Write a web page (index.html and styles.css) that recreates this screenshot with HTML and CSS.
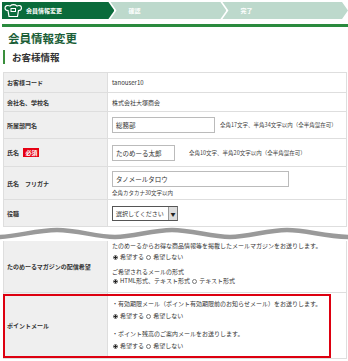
FILE: index.html
```html
<!DOCTYPE html>
<html lang="ja">
<head>
    <meta charset="UTF-8">
    <meta name="viewport" content="width=device-width, initial-scale=1.0">
    <title>会員情報変更</title>
    <link rel="stylesheet" href="styles.css">
</head>
<body>
<div class="page">

    <!-- ステップ -->
    <div class="steps">
        <div class="step step-current">
            <svg class="step-logo" width="20" height="15" viewBox="0 0 20 15">
                <path d="M2 5 C2 2.5 5 2 7 3 C9 1.5 12 1.5 14 3 C16 2 18.5 2.5 18.5 5 C18.5 7 16.5 7.5 15.5 7.5 L14.5 13.5 L6 13.5 L5 7.5 C3.5 7.5 2 7 2 5 Z" fill="none" stroke="#fff" stroke-width="1.2"/>
                <rect x="8" y="5.5" width="4.5" height="3" fill="none" stroke="#fff" stroke-width="1"/>
            </svg>
            <span>会員情報変更</span>
        </div>
        <div class="step">確認</div>
        <div class="step step-last">完了</div>
    </div>

    <h1 class="page-title">会員情報変更</h1>
    <h2 class="section-title">お客様情報</h2>

    <table class="form-table">
        <tr class="row-code">
            <th>お客様コード</th>
            <td>tanouser10</td>
        </tr>
        <tr class="row-company">
            <th>会社名、学校名</th>
            <td>株式会社大塚商会</td>
        </tr>
        <tr class="row-dept">
            <th>所属部門名</th>
            <td>
                <div class="field">
                    <div class="input input-dept">総務部</div>
                    <span class="note">全角17文字、半角34文字以内（全半角混在可）</span>
                </div>
            </td>
        </tr>
        <tr class="row-name">
            <th>氏名 <span class="required">必須</span></th>
            <td>
                <div class="field">
                    <div class="input input-name">たのめーる太郎</div>
                    <span class="note note-name">全角10文字、半角20文字以内（全半角混在可）</span>
                </div>
            </td>
        </tr>
        <tr class="row-kana">
            <th>氏名　フリガナ</th>
            <td>
                <div class="input input-kana">タノメールタロウ</div>
                <div class="note note-under">全角カタカナ30文字以内</div>
            </td>
        </tr>
        <tr class="row-post">
            <th>役職</th>
            <td>
                <div class="select">
                    <span class="select-text">選択してください</span>
                    <span class="select-btn">▼</span>
                </div>
            </td>
        </tr>
    </table>

    <!-- 省略の波線 -->
    <div class="wave">
        <svg width="348" height="14" viewBox="0 0 348 14">
            <path d="M-3 10 C16 10 36 3 57 3 C78 3 96 10 115 10 C134 10 152 3 172 3 C192 3 211 10 230 10 C249 10 267 3 287 3 C307 3 326 10 351 10" fill="none" stroke="#9a9a9a" stroke-width="4.5"/>
        </svg>
    </div>

    <div class="lower">
        <table class="form-table">
            <tr class="row-mag">
                <th>たのめーるマガジンの配信希望</th>
                <td>
                    <p class="line">たのめーるからお得な商品情報等を掲載したメールマガジンをお送りします。</p>
                    <p class="line radios"><span class="radio checked"></span>希望する <span class="radio"></span>希望しない</p>
                    <p class="line line-sub">ご希望されるメールの形式</p>
                    <p class="line line-tight"><span class="radio checked"></span>HTML形式、テキスト形式 <span class="radio"></span>テキスト形式</p>
                </td>
            </tr>
            <tr class="row-point">
                <th>ポイントメール</th>
                <td>
                    <p class="line">・有効期限メール（ポイント有効期限前のお知らせメール）をお送りします。</p>
                    <p class="line radios"><span class="radio checked"></span>希望する <span class="radio"></span>希望しない</p>
                    <p class="line line-gap">・ポイント残高のご案内メールをお送りします。</p>
                    <p class="line radios"><span class="radio checked"></span>希望する <span class="radio"></span>希望しない</p>
                </td>
            </tr>
        </table>
        <!-- 注目枠 -->
        <div class="highlight"></div>
    </div>

</div>
</body>
</html>
```

FILE: styles.css
```css
* { margin: 0; padding: 0; box-sizing: border-box; }
body {
    background: #fff;
    color: #333;
    font-family: "Noto Sans CJK JP", "Noto Sans", sans-serif;
    font-size: 6px;
}
.page { padding: 2px 0 0 2px; width: 348px; overflow: hidden; }

/* steps */
.steps { display: flex; height: 17px; }
.step {
    display: flex;
    align-items: center;
    height: 17px;
    width: 120px;
    padding-left: 18px;
    background: #bdd9cc;
    color: #fff;
    font-weight: bold;
    font-size: 6px;
    margin-left: -4px;
    clip-path: polygon(0 0, calc(100% - 6px) 0, 100% 50%, calc(100% - 6px) 100%, 0 100%, 6px 50%);
}
.step-current {
    width: 117px;
    margin-left: 0;
    padding-left: 1px;
    background: #0a6b3b;
    clip-path: polygon(0 0, calc(100% - 6px) 0, 100% 50%, calc(100% - 6px) 100%, 0 100%);
}
.step-current span { margin-left: 3px; }
.step-last { width: 130px; }
.step-logo { display: block; }

.page-title {
    margin-top: 5px;
    border-top: 3px solid #2a8a3e;
    padding: 4px 0 0 6px;
    font-size: 11.5px;
    line-height: 14px;
    color: #1b5e37;
}
.section-title {
    margin: 5px 0 0 1px;
    border-left: 2px solid #3a8f3c;
    padding-left: 7px;
    font-size: 9.5px;
    line-height: 14px;
    font-weight: bold;
    color: #333;
}

/* table */
.form-table {
    border-collapse: collapse;
    width: 344px;
    margin-left: 1px;
}
.page > .form-table { margin-top: 8px; }
.form-table th, .form-table td {
    border: 1px solid #dedede;
    vertical-align: middle;
    text-align: left;
}
.form-table th {
    width: 104px;
    background: #efefef;
    padding-left: 3px;
    font-weight: bold;
    font-size: 6px;
}
.form-table td { padding-left: 4px; }
.row-code { height: 20px; }
.row-company { height: 19px; }
.row-dept { height: 27px; }
.row-name { height: 28px; }
.row-kana { height: 33px; }
.row-post { height: 27px; }

.required {
    display: inline-block;
    background: #e60012;
    color: #fff;
    padding: 0 2px;
    margin-left: 3px;
    line-height: 9px;
}

.field { display: flex; align-items: center; }
.input {
    border: 1px solid #bbb;
    height: 16px;
    line-height: 14px;
    padding-left: 3px;
    font-size: 6.5px;
    color: #333;
    background: #fff;
}
.input-dept { width: 103px; }
.input-name { width: 63px; }
.input-kana { width: 177px; margin-top: 1px; }
.note { margin-left: 5px; font-size: 5.5px; color: #444; }
.note-name { margin-left: 14px; }
.note-under { margin: 2px 0 0 0; }

.select {
    display: flex;
    width: 66px;
    height: 15px;
    border: 1px solid #555;
    border-right-color: #777;
    background: #fff;
}
.select-text { flex: 1; line-height: 13px; padding-left: 3px; font-size: 6px; }
.select-btn {
    width: 9px;
    background: #ddd;
    border-left: 1px solid #999;
    font-size: 5px;
    line-height: 13px;
    text-align: center;
    color: #222;
}

/* wave */
.wave { height: 14px; margin-left: -2px; }
.wave svg { display: block; }

/* lower part */
.lower { position: relative; }
.row-mag td { padding: 0 0 7px 4px; }
.row-point td { padding: 5px 0 6px 4px; }
.row-mag th, .row-mag td { border-top: none; }
.line { line-height: 10px; white-space: nowrap; }
.row-point .line { line-height: 12px; }
.radios { line-height: 11px; }
.line-sub { margin-top: 5px; line-height: 9px; }
.line-tight { line-height: 9px; }
.line-gap { margin-top: 6px; }
.radio {
    display: inline-block;
    width: 5px;
    height: 5px;
    border: 1px solid #777;
    border-radius: 50%;
    margin: 0 2px 0 1px;
    vertical-align: -0.5px;
    background: #fff;
}
.radio.checked { background: radial-gradient(circle, #222 0 1.2px, #fff 1.4px); }

.highlight {
    position: absolute;
    left: 1px;
    top: 53px;
    width: 328px;
    height: 64px;
    border: 2px solid #dd0010;
}
```
